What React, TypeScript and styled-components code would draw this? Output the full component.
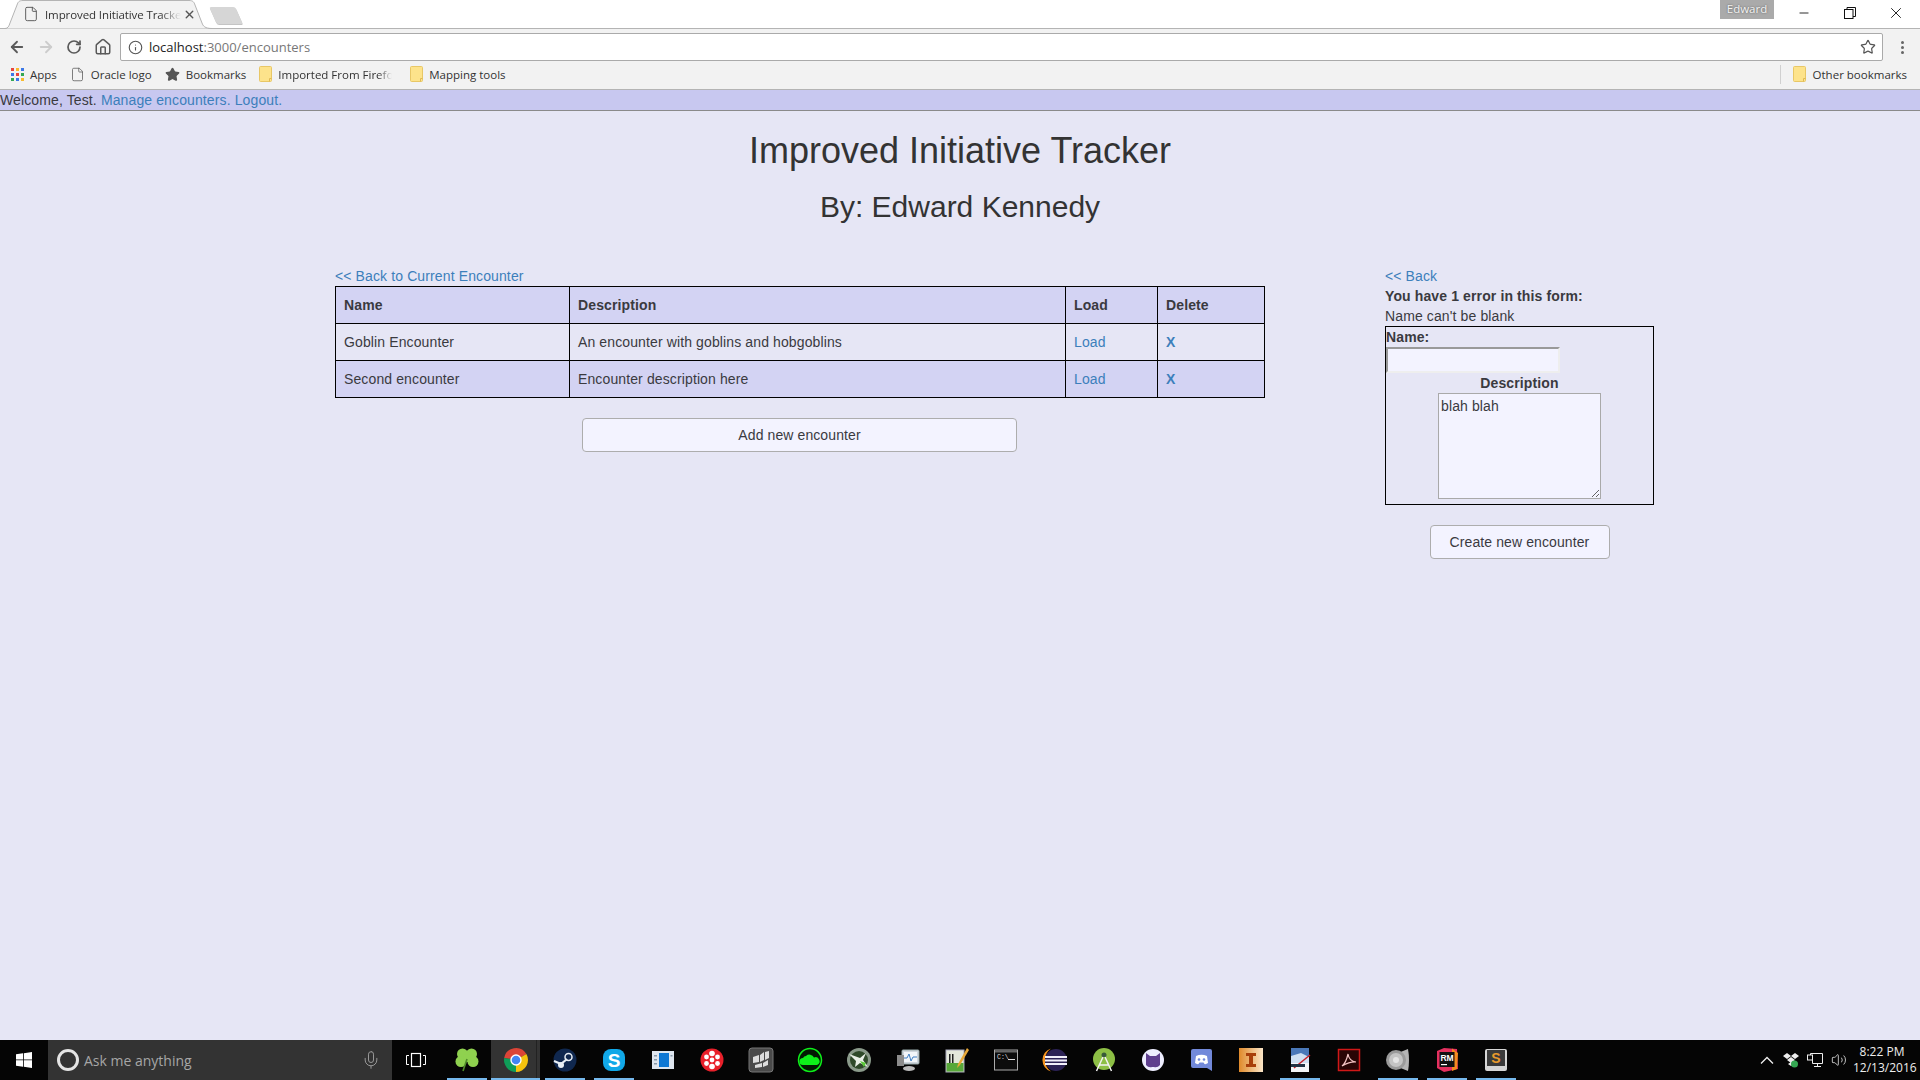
import React from "react";
import styled, { createGlobalStyle } from "styled-components";
import { ArrowLeft, ArrowRight, RotateCw, Home, Info, Star, File, Mic, Minus, X, Volume2 } from "lucide-react";

const Global = createGlobalStyle`
  html, body { margin: 0; padding: 0; height: 100%; overflow: hidden; }
  body { font-family: "Liberation Sans", Arial, sans-serif; font-size: 14px; line-height: 20px; letter-spacing: 0.12px; color: #3a3a3f; background: #e6e6f5; }
  * { box-sizing: border-box; }
`;

const Screen = styled.div`display: flex; flex-direction: column; height: 1080px; width: 1920px;`;

const TabStrip = styled.div`position: relative; display: flex; height: 29px; background: #fff; border-bottom: 1px solid #b4b4b4; padding-left: 6px; letter-spacing: 0;`;
const Tab = styled.div`
  position: relative; z-index: 1; display: flex; align-items: center; width: 206px; height: 29px; padding: 0 0 1px 17px;
  font: 11.5px "Open Sans", sans-serif; color: #333;
`;
const TabShape = styled.svg`position: absolute; left: -6px; top: 0;`;
const TabPage = styled(File)`position: relative; color: #555;`;
const TabTitle = styled.span`position: relative; margin-left: 6px; width: 136px; white-space: nowrap; overflow: hidden; letter-spacing: -0.1px; -webkit-mask-image: linear-gradient(90deg, #000 85%, transparent);`;
const TabClose = styled(X)`position: relative; margin-left: 2px; color: #555;`;
const NewTab = styled.div`width: 26px; height: 17px; margin: 7px 0 0 1px; background: #d6d6d6; transform: skewX(24deg); border-radius: 2px; box-shadow: 0 1px 0 #c4c4c4;`;
const Profile = styled.div`
  margin-left: auto; width: 54px; height: 19px; background: #aaa; color: #f4f4f4; text-align: center;
  font: 11.5px/18px "Open Sans", sans-serif; text-shadow: 0 0 2px #555;
`;
const WinControls = styled.div`display: flex; align-items: flex-start; margin-left: 7px; margin-right: 1px;`;
const WinButton = styled.div`width: 46px; height: 26px; display: flex; align-items: center; justify-content: center; color: #111;`;

const Toolbar = styled.div`display: flex; align-items: center; height: 32px; background: #f2f2f2; padding: 4px 0 0 3px; letter-spacing: 0;`;
const NavBtn = styled.div<{ $dim?: boolean }>`width: 28.5px; display: flex; justify-content: center; color: ${p => (p.$dim ? "#ccc" : "#5a5a5a")};`;
const Omnibox = styled.div`
  display: flex; align-items: center; flex: 1; height: 28px; margin-left: 3px; padding: 0 6px 0 7px; background: #fff;
  border: 1px solid #aaa; border-radius: 2px; font: 13px "Open Sans", sans-serif; color: #777;
`;
const Host = styled.span`color: #222; margin-left: 6px;`;
const OmniStar = styled(Star)`margin-left: auto; color: #555;`;
const Dots = styled.div`width: 37px; display: flex; flex-direction: column; align-items: center; gap: 2px; padding-left: 1px;`;
const Dot = styled.i`width: 3px; height: 3px; background: #666; border-radius: 50%;`;

const Bookmarks = styled.div`display: flex; align-items: center; height: 29px; background: #f2f2f2; border-bottom: 1px solid #b4b4b4; padding: 0 0 2px 11px; font: 11.5px "Open Sans", sans-serif; color: #333; letter-spacing: 0;`;
const Bookmark = styled.div`display: flex; align-items: center; gap: 6px; margin-right: 13px; white-space: nowrap;`;
const BmLabel = styled.span<{ $fade?: boolean; $w?: number }>`
  ${p => (p.$w ? `width:${p.$w}px; overflow:hidden;` : "")}
  ${p => (p.$fade ? "margin-right: 5px; -webkit-mask-image: linear-gradient(90deg, #000 88%, transparent);" : "")}
`;
const BmRight = styled.div`margin-left: auto; display: flex; align-items: center; height: 19px; border-left: 1px solid #d0d0d0; padding: 0 13px 0 12px; gap: 7px;`;

const TopBar = styled.div`height: 21px; background: #c8c8f0; border-bottom: 1px solid #8a8a8a; white-space: nowrap;`;
const Link = styled.a`color: #3c7fbb; text-decoration: none;`;

const Main = styled.main`flex: 1; overflow: hidden;`;
const Title = styled.h1`margin: 20px 0 19px; font-size: 36px; line-height: 40px; font-weight: 500; text-align: center; color: #333; letter-spacing: 0;`;
const Subtitle = styled.h2`margin: 0 0 43px; font-size: 30px; line-height: 33px; font-weight: 500; text-align: center; color: #333; letter-spacing: 0;`;
const Columns = styled.div`display: flex; align-items: flex-start; gap: 121px; padding-left: 335px;`;
const LeftCol = styled.section`width: 929px;`;
const RightCol = styled.section`width: 269px;`;

const Table = styled.table`width: 929px; border-collapse: collapse; table-layout: fixed;`;
const Row = styled.tr<{ $shade?: boolean }>`background: ${p => (p.$shade ? "#d3d3f3" : "transparent")};`;
const Th = styled.th<{ $w: number }>`width: ${p => p.$w}px; height: 37px; padding: 8px; border: 1px solid #000; text-align: left; font-weight: 700;`;
const Td = styled.td`height: 37px; padding: 8px; border: 1px solid #000;`;
const DeleteLink = styled(Link)`font-weight: 700;`;

const Button = styled.button<{ $w: number }>`
  display: block; width: ${p => p.$w}px; height: 34px; margin: 20px auto 0; background: #f3f3ff; border: 1px solid #adadad; border-radius: 4px;
  font: 14px/20px "Liberation Sans", sans-serif; letter-spacing: 0.1px; color: #3a3a3f; padding: 6px 12px;
`;
const ErrorTitle = styled.div`font-weight: 700;`;
const Form = styled.form`border: 1px solid #000; height: 179px;`;
const Label = styled.label`display: block; font-weight: 700;`;
const NameInput = styled.input`
  display: block; width: 174px; height: 26px; background: #f3f3ff; border-width: 2px; border-style: solid;
  border-color: #999 #eee #eee #999; padding: 0 2px; outline: none;
`;
const CenterLabel = styled(Label)`text-align: center;`;
const DescInput = styled.textarea`
  display: block; width: 163px; height: 106px; margin: 0 auto; background: #f3f3ff; border: 1px solid #a9a9a9; padding: 2px;
  font: 14px/20px "Liberation Sans", sans-serif; letter-spacing: 0.12px; color: #3a3a3f; outline: none; overflow: auto;
`;

const Taskbar = styled.footer`display: flex; align-items: stretch; height: 40px; background: #050505; color: #eee; flex: none; letter-spacing: 0;`;
const StartBtn = styled.div`width: 48px; display: flex; align-items: center; justify-content: center;`;
const Search = styled.div`width: 344px; background: #333; display: flex; align-items: center; padding: 0 11px 0 9px; color: #a6a6a6; font: 14px "Open Sans", sans-serif;`;
const Cortana = styled.i`width: 22px; height: 22px; border: 3px solid #e4e4e4; border-radius: 50%; margin-right: 5px;`;
const SearchMic = styled(Mic)`margin-left: auto; color: #999;`;
const TaskView = styled.div`width: 50px; padding-right: 2px; display: flex; align-items: center; justify-content: center;`;
const Slot = styled.div<{ $on?: boolean; $active?: boolean }>`
  position: relative; width: 49px; display: flex; align-items: center; justify-content: center;
  background: ${p => (p.$active ? "linear-gradient(90deg, #333 0 45px, #222 45px 46px, #333 46px)" : "transparent")};
  &::after {
    content: ""; display: ${p => (p.$on ? "block" : "none")}; position: absolute;
    left: ${p => (p.$active ? 0 : 5)}px; right: ${p => (p.$active ? 0 : 4)}px; bottom: 0; height: 2px; background: #76b9ed;
  }
`;
const Tray = styled.div`margin-left: auto; display: flex; align-items: center; gap: 8px; padding-right: 9px;`;
const Clock = styled.div`width: 58px; margin-left: -2px; text-align: center; font: 12px/16px "Open Sans", sans-serif; color: #eee; white-space: nowrap;`;

const Folder = () => (
  <svg width="13" height="16" viewBox="0 0 13 16"><path d="M.5 1.500a1 1 0 0 1 1-1h10a1 1 0 0 1 1 1v13a1 1 0 0 1-1 1h-10a1 1 0 0 1-1-1z" fill="#fde38b" stroke="#e8c766" /><path d="M10.500 15.500v-3h2" fill="none" stroke="#e0ba55" /></svg>
);
const AppsGrid = () => (
  <svg width="13" height="13" viewBox="0 0 13 13">
    {["#e8453c", "#f9bb2d", "#3b78e7", "#3b78e7", "#e8453c", "#34a853", "#34a853", "#3b78e7", "#f9bb2d"].map((c, i) => (
      <rect key={i} x={(i % 3) * 5} y={Math.floor(i / 3) * 5} width="3" height="3" fill={c} />
    ))}
  </svg>
);
const WinLogo = () => (
  <svg width="16" height="16" viewBox="0 0 16 16" fill="#fff"><path d="M0 2.300 7 1.300V7.500H0zM7.800 1.200 16 0V7.500H7.800zM0 8.300H7V14.700L0 13.700zM7.800 8.300H16V16L7.800 14.800z" /></svg>
);
const RestoreIcon = () => (
  <svg width="12" height="12" viewBox="0 0 12 12" fill="none" stroke="currentColor"><rect x="0.500" y="2.500" width="8.500" height="9" /><path d="M3 2.500V.5h8.500v9H9" /></svg>
);

const Ico = ({ children }: { children: React.ReactNode }) => <svg width="26" height="26" viewBox="0 0 26 26">{children}</svg>;

const icons: { on?: boolean; active?: boolean; el: React.ReactNode }[] = [
  { on: true, el: <Ico><g fill="#8fd14f"><circle cx="8.500" cy="7" r="5.500" /><circle cx="17.500" cy="7" r="5.500" /><circle cx="7" cy="14.500" r="5.500" /><circle cx="19" cy="14.500" r="5.500" /><circle cx="13" cy="11" r="4" /></g><path d="M13 12 9 24" stroke="#4f8a2a" strokeWidth="1.600" /></Ico> },
  { on: true, active: true, el: <Ico><path d="M13 13 1.180 10.920A12 12 0 0 1 23.390 7z" fill="#db4437" /><path d="M13 13 23.390 7A12 12 0 0 1 13 25z" fill="#f4c20d" /><path d="M13 13 13 25A12 12 0 0 1 1.180 10.920z" fill="#0f9d58" /><circle cx="13" cy="13" r="5.700" fill="#fff" /><circle cx="13" cy="13" r="4.300" fill="#4285f4" /></Ico> },
  { on: true, el: <Ico><circle cx="13" cy="13" r="11.500" fill="#10284f" /><circle cx="16.500" cy="10" r="3.500" fill="none" stroke="#e8eef4" strokeWidth="1.500" /><path d="M2 14 9 17 15 12" stroke="#e8eef4" strokeWidth="2.200" fill="none" /><circle cx="9" cy="18" r="3" fill="#e8eef4" /></Ico> },
  { on: true, el: <Ico><rect x="2" y="2" width="22" height="22" rx="8" fill="#11a8e8" /><text x="13" y="20" textAnchor="middle" fontSize="19" fontWeight="700" fill="#fff" fontFamily="Liberation Sans">S</text></Ico> },
  { el: <Ico><rect x="2" y="4" width="22" height="18" fill="#dfe6ef" /><rect x="9" y="6" width="10" height="14" fill="#0f78d4" /><rect x="4" y="8" width="3" height="1.500" fill="#89a" /><rect x="4" y="12" width="3" height="1.500" fill="#89a" /><rect x="4" y="16" width="3" height="1.500" fill="#89a" /><rect x="20.500" y="8" width="2" height="1.500" fill="#89a" /></Ico> },
  { el: <Ico><circle cx="13" cy="13" r="11.500" fill="#e8202a" /><g fill="#fff"><circle cx="13" cy="6.500" r="2.800" /><circle cx="7.500" cy="10" r="2.400" /><circle cx="18.500" cy="10" r="2.400" /><circle cx="7.500" cy="16.500" r="2.400" /><circle cx="18.500" cy="16.500" r="2.400" /><circle cx="13" cy="19.500" r="2.800" /><circle cx="13" cy="13" r="2.400" /></g></Ico> },
  { el: <Ico><rect x="1" y="1" width="24" height="24" rx="3" fill="#4a4a4a" stroke="#777" /><path d="M5 10 11 8V15L5 16zM12 8 16 5V13L12 15zM17 5 21 4V11L17 13zM7 18 14 16V20L7 21zM15 16 20 13V18L15 20z" fill="#ddd" /></Ico> },
  { el: <Ico><circle cx="13" cy="13" r="11.500" fill="#031a03" stroke="#0ef01a" strokeWidth="1.500" /><path d="M6 18a3.500 3.500 0 0 1 0-7 4 4 0 0 1 3-2 5 5 0 0 1 8 1.500A4 4 0 0 1 20 18z" fill="#0ef01a" /></Ico> },
  { el: <Ico><circle cx="13" cy="13" r="12" fill="#8a9a8a" /><circle cx="13" cy="13" r="9" fill="#2f4a2a" /><path d="M3 7 14 11 20 6 17 13 22 20 14 16 9 20 10 14z" fill="#e8efe6" /><path d="M14 14l6 2-2 4z" fill="#5ccb3b" /></Ico> },
  { el: <Ico><rect x="7" y="3" width="17" height="14" rx="1" fill="#cfd6dd" stroke="#9aa" /><rect x="9" y="5" width="13" height="10" fill="#f2f6fa" /><path d="M9 11h3l2-4 2 7 2-4h4" stroke="#3f7fc4" fill="none" /><rect x="2" y="8" width="7" height="11" fill="#8c8c8c" /><ellipse cx="14" cy="21.500" rx="6" ry="2.500" fill="#bbb" /></Ico> },
  { el: <Ico><rect x="2" y="3" width="18" height="22" fill="#e4e8dc" stroke="#aab" /><rect x="2.500" y="16" width="17" height="8.500" fill="#58a83a" /><rect x="5" y="7" width="1.500" height="9" fill="#222" /><rect x="8" y="7" width="1.500" height="9" fill="#222" /><path d="M23 1 14 17l-1 4 3-3 9-15z" fill="#e8a838" /></Ico> },
  { el: <Ico><rect x="1.500" y="3" width="23" height="20" fill="#0c0c0c" stroke="#aaa" /><rect x="2" y="3.500" width="22" height="2" fill="#666" /><text x="4" y="12" fontSize="6.500" fill="#ddd" fontFamily="Liberation Mono">C:\</text><rect x="15" y="12" width="7" height="1" fill="#ddd" /></Ico> },
  { el: <Ico><path d="M9 1.500a12 12 0 0 0 0 23A14 14 0 0 1 9 1.500z" fill="#f7941e" /><circle cx="14" cy="13" r="11" fill="#2c2255" /><g fill="#f2f0fa"><rect x="3" y="9" width="22" height="2" /><rect x="3" y="12.500" width="22" height="2" /><rect x="3" y="16" width="22" height="2" /></g></Ico> },
  { el: <Ico><circle cx="13" cy="12" r="11" fill="#8dbf45" /><circle cx="13" cy="8" r="2.500" fill="#38593a" /><path d="M12 10 5.500 24M14 10l6.500 14M8 18h10" stroke="#f2f2f2" strokeWidth="1.500" fill="none" /></Ico> },
  { el: <Ico><circle cx="13" cy="13" r="11" fill="#eef" /><path d="M6 6l4 3h6l4-3v12a6 6 0 0 1-6 2h-2a6 6 0 0 1-6-2z" fill="#5f3f8f" /></Ico> },
  { el: <Ico><path d="M4 2h17a2 2 0 0 1 2 2v20l-5-3H4a2 2 0 0 1-2-2V4a2 2 0 0 1 2-2z" fill="#7289da" /><path d="M7 9q5.500-2.500 11 0l1 7q-2 1.500-3.500 1l-1-1.500h-4L9.500 17q-1.500.5-3.500-1z" fill="#fff" /><circle cx="10" cy="12.500" r="1.300" fill="#7289da" /><circle cx="15" cy="12.500" r="1.300" fill="#7289da" /></Ico> },
  { el: <Ico><defs><linearGradient id="ig" x1="0" x2="1"><stop offset="0" stopColor="#e08a2a" /><stop offset="1" stopColor="#fbe6c8" /></linearGradient></defs><rect x="1" y="1" width="24" height="24" fill="url(#ig)" /><path d="M8 6h10v3h-3v8h3v3H8v-3h3V9H8z" fill="#a83f0a" /></Ico> },
  { on: true, el: <Ico><rect x="4" y="1" width="18" height="24" fill="#f4f6f8" /><path d="M4 1h18v15H4z" fill="#4a78b8" /><path d="M4 9l10-3 8 4v6H4z" fill="#cfe0f2" /><path d="M7 21 23 8" stroke="#c8202a" strokeWidth="1.500" /><rect x="4" y="17" width="14" height="3" fill="#234" /></Ico> },
  { el: <Ico><rect x="2.500" y="2.500" width="21" height="21" fill="#2a0505" stroke="#d01818" strokeWidth="1.500" /><path d="M6 19q4-3 6-12 1 7 8 8-6-.5-14 4z" fill="none" stroke="#f4c4c4" strokeWidth="1.200" /></Ico> },
  { on: true, el: <Ico><path d="M13 6 23 2Q25 13 23 24L13 20z" fill="#b4b4b4" /><circle cx="11" cy="13" r="10" fill="#9a9a9a" /><circle cx="11" cy="13" r="7" fill="#c4c4c4" /><circle cx="11" cy="13" r="3" fill="#e4e4e4" /></Ico> },
  { on: true, el: <Ico><path d="M3 4 10 1l13 1 1 20-14 3-7-4z" fill="#e5305f" /><path d="M18 1.500 24 6l-1 16-5 2z" fill="#f58a1f" /><rect x="5.500" y="5" width="15" height="15" fill="#111" /><text x="13" y="14" textAnchor="middle" fontSize="8.500" fontWeight="700" fill="#fff" fontFamily="Liberation Sans">RM</text><rect x="7" y="17" width="6" height="1.200" fill="#fff" /></Ico> },
  { on: true, el: <Ico><rect x="2" y="2" width="22" height="22" rx="2" fill="#d6d6d6" /><rect x="4" y="3" width="18" height="16" fill="#3a3a3a" /><text x="13" y="16" textAnchor="middle" fontSize="14" fontWeight="700" fill="#e89a2c" fontFamily="Liberation Sans">S</text></Ico> },
];

const rows = [
  { name: "Goblin Encounter", desc: "An encounter with goblins and hobgoblins" },
  { name: "Second encounter", desc: "Encounter description here" },
];

export default function App() {
  return (
    <Screen>
      <Global />
      <TabStrip>
        <Tab>
          <TabShape width="212" height="29" viewBox="0 0 212 29">
            <path d="M0 28.500H5C8 28.500 9 26 10 23L17 5C18 2 19 .5 23 .5H189C193 .5 194 2 195 5L202 23C203 26 205 28.500 212 28.500" fill="#f2f2f2" stroke="#b4b4b4" />
          </TabShape>
          <TabPage size={16} strokeWidth={1.400} />
          <TabTitle>Improved Initiative Tracker</TabTitle>
          <TabClose size={13} strokeWidth={2.600} />
        </Tab>
        <NewTab />
        <Profile>Edward</Profile>
        <WinControls>
          <WinButton><Minus size={14} strokeWidth={1.500} /></WinButton>
          <WinButton><RestoreIcon /></WinButton>
          <WinButton><X size={18} strokeWidth={1.200} /></WinButton>
        </WinControls>
      </TabStrip>
      <Toolbar>
        <NavBtn><ArrowLeft size={18} strokeWidth={2.400} /></NavBtn>
        <NavBtn $dim><ArrowRight size={18} strokeWidth={2.400} /></NavBtn>
        <NavBtn><RotateCw size={16} strokeWidth={2.600} /></NavBtn>
        <NavBtn><Home size={18} strokeWidth={2} /></NavBtn>
        <Omnibox>
          <Info size={15} strokeWidth={1.800} color="#555" />
          <Host>localhost</Host>:3000/encounters
          <OmniStar size={16} strokeWidth={1.800} />
        </Omnibox>
        <Dots><Dot /><Dot /><Dot /></Dots>
      </Toolbar>
      <Bookmarks>
        <Bookmark><AppsGrid /><BmLabel>Apps</BmLabel></Bookmark>
        <Bookmark><File size={15} strokeWidth={1.200} color="#555" /><BmLabel>Oracle logo</BmLabel></Bookmark>
        <Bookmark><Star size={15} fill="#555" color="#555" /><BmLabel>Bookmarks</BmLabel></Bookmark>
        <Bookmark><Folder /><BmLabel $fade $w={114}>Imported From Firefox</BmLabel></Bookmark>
        <Bookmark><Folder /><BmLabel>Mapping tools</BmLabel></Bookmark>
        <BmRight><Folder /><BmLabel>Other bookmarks</BmLabel></BmRight>
      </Bookmarks>
      <TopBar>
        Welcome, Test. <Link href="#">Manage encounters.</Link> <Link href="#">Logout.</Link>
      </TopBar>
      <Main>
        <Title>Improved Initiative Tracker</Title>
        <Subtitle>By: Edward Kennedy</Subtitle>
        <Columns>
          <LeftCol>
            <Link href="#">&lt;&lt; Back to Current Encounter</Link>
            <Table>
              <thead>
                <Row $shade>
                  <Th $w={234}>Name</Th>
                  <Th $w={496}>Description</Th>
                  <Th $w={92}>Load</Th>
                  <Th $w={107}>Delete</Th>
                </Row>
              </thead>
              <tbody>
                {rows.map((r, i) => (
                  <Row key={r.name} $shade={i === 1}>
                    <Td>{r.name}</Td>
                    <Td>{r.desc}</Td>
                    <Td><Link href="#">Load</Link></Td>
                    <Td><DeleteLink href="#">X</DeleteLink></Td>
                  </Row>
                ))}
              </tbody>
            </Table>
            <Button $w={435} type="button">Add new encounter</Button>
          </LeftCol>
          <RightCol>
            <Link href="#">&lt;&lt; Back</Link>
            <ErrorTitle>You have 1 error in this form:</ErrorTitle>
            <div>Name can't be blank</div>
            <Form>
              <Label>Name:</Label>
              <NameInput />
              <CenterLabel>Description</CenterLabel>
              <DescInput defaultValue="blah blah" />
            </Form>
            <Button $w={180} type="button">Create new encounter</Button>
          </RightCol>
        </Columns>
      </Main>
      <Taskbar>
        <StartBtn><WinLogo /></StartBtn>
        <Search><Cortana />Ask me anything<SearchMic size={20} strokeWidth={1.200} /></Search>
        <TaskView>
          <svg width="20" height="16" viewBox="0 0 20 16" fill="none" stroke="#fff"><rect x="5.500" y="1.500" width="9" height="13" strokeWidth="1.200" /><path d="M3 3.500H.5v9H3M17 3.500h2.500v9H17" /></svg>
        </TaskView>
        {icons.map((ic, i) => (
          <Slot key={i} $on={ic.on} $active={ic.active}>{ic.el}</Slot>
        ))}
        <Tray>
          <svg width="16" height="16" viewBox="0 0 16 16" fill="none" stroke="#eee" strokeWidth="1.300"><path d="M2 11.500 8 5.500 14 11.500" /></svg>
          <svg width="16" height="16" viewBox="0 0 16 16"><path d="M4 1 8 4 4 7 0 4zM12 1l4 3-4 3-4-3zM4 8l4-3 4 3-4 3zM5 12l3-2 3 2-3 2z" fill="#eee" /><circle cx="11.500" cy="12" r="3.500" fill="#35a853" /></svg>
          <svg width="16" height="16" viewBox="0 0 16 16" fill="none" stroke="#eee"><path d="M3.500 3V1.500h12v10h-10V8M10.500 11.500v3M7 14.500h7" /><rect x="0.500" y="3" width="5" height="5" /></svg>
          <Volume2 size={16} strokeWidth={1.200} />
          <Clock>8:22 PM<br />12/13/2016</Clock>
        </Tray>
      </Taskbar>
    </Screen>
  );
}
